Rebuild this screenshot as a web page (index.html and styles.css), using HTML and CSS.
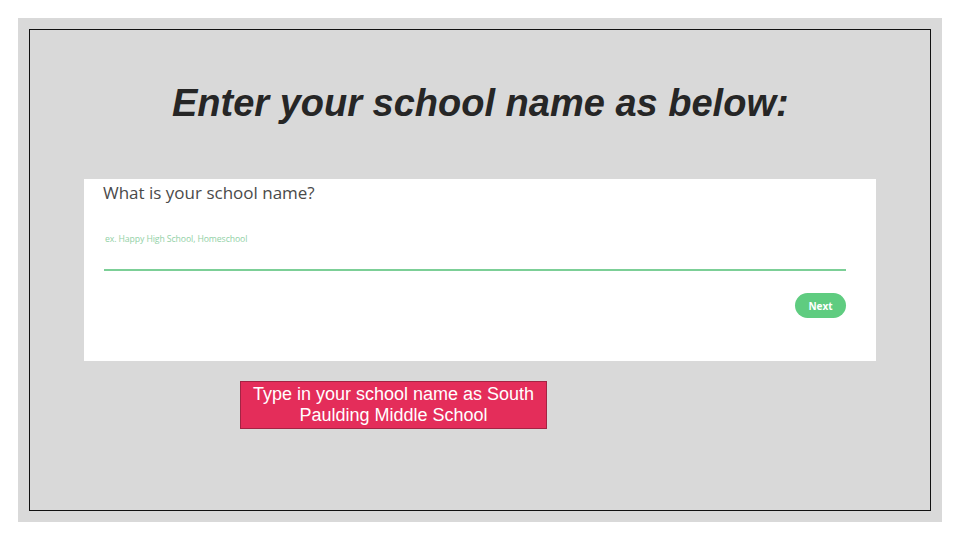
FILE: index.html
```html
<!DOCTYPE html>
<html>
<head>
<meta charset="utf-8">
<link rel="stylesheet" href="styles.css">
</head>
<body>
<div class="slide">
  <div class="frame">
    <h1 class="title">Enter your school name as below:</h1>
    <div class="panel">
      <div class="question">What is your school name?</div>
      <div class="field">
        <div class="placeholder">ex. Happy High School, Homeschool</div>
      </div>
      <div class="actions"><span class="next">Next</span></div>
    </div>
    <div class="note">Type in your school name as South<br>Paulding Middle School</div>
  </div>
</div>
</body>
</html>
```

FILE: styles.css
```css
html, body { margin: 0; padding: 0; background: #fff; }
body { width: 960px; height: 540px; padding: 18px; box-sizing: border-box; }
.slide {
  width: 924px; height: 504px; background: #d9d9d9;
  padding: 11px 11px 11px 11px; box-sizing: border-box;
}
.frame {
  width: 902px; height: 482px; border: 1.5px solid #111; box-sizing: border-box;
  display: flex; flex-direction: column; align-items: flex-start;
}
.title {
  margin: 53px 0 0 142px;
  font-family: "Liberation Sans", Arial, sans-serif;
  font-style: italic; font-weight: bold; font-size: 38px; line-height: 40px;
  color: #262626; letter-spacing: 0;
}
.panel {
  margin: 56px 0 0 54px;
  width: 792px; height: 182px; background: #fff; box-sizing: border-box;
  padding: 2px 30px 0 19px;
  font-family: "Open Sans", "Noto Sans", sans-serif;
}
.question { font-size: 17px; color: #4a4a4a; line-height: 24px; }
.field {
  margin: 28px 0 0 1px; height: 38px; border-bottom: 2px solid #7ccf97;
  box-sizing: border-box; padding-top: 0;
}
.placeholder { font-size: 8.7px; color: #92d1a6; line-height: 13px; padding-left: 1px; letter-spacing: -0.1px; }
.actions { display: flex; justify-content: flex-end; margin-top: 22px; }
.next {
  display: inline-flex; align-items: center; justify-content: center;
  width: 51px; height: 25px; border-radius: 13px; background: #5fcc80;
  color: #fff; font-weight: bold; font-size: 10px;
}
.note {
  margin: 20px 0 0 210px; width: 307px; height: 48px; box-sizing: border-box;
  background: #e42d5a; border: 1.5px solid #a32444;
  color: #fff; text-align: center;
  font-family: "Liberation Sans", Arial, sans-serif; font-size: 18px; line-height: 21px;
  padding-top: 2px;
}
```
